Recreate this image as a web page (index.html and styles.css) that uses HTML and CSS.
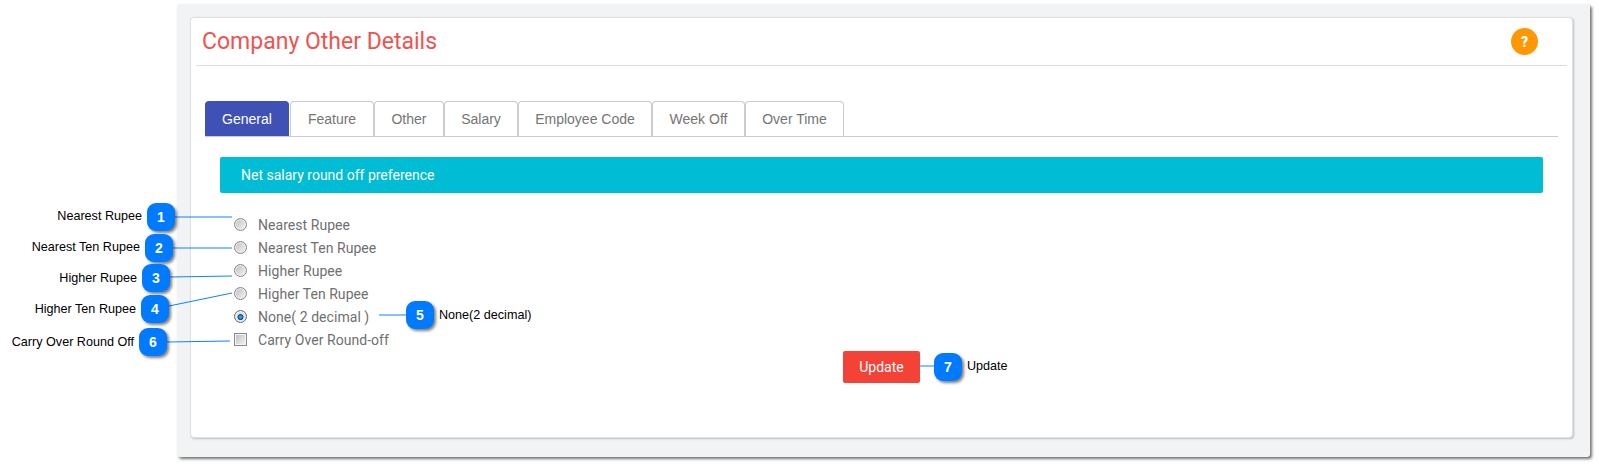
FILE: index.html
```html
<!DOCTYPE html>
<html lang="en">
<head>
<meta charset="utf-8">
<title>Company Other Details</title>
<link rel="stylesheet" href="styles.css">
</head>
<body>
<main class="shell">
  <section class="card">
    <header class="card-head">
      <h1 class="title">Company Other Details</h1>
      <span class="help">?</span>
    </header>
    <nav class="tabs">
      <a class="tab active">General</a>
      <a class="tab">Feature</a>
      <a class="tab">Other</a>
      <a class="tab">Salary</a>
      <a class="tab">Employee Code</a>
      <a class="tab">Week Off</a>
      <a class="tab">Over Time</a>
    </nav>
    <div class="banner">Net salary round off preference</div>
    <form class="options">
      <label class="option"><input type="radio" name="r"><span>Nearest Rupee</span></label>
      <label class="option"><input type="radio" name="r"><span>Nearest Ten Rupee</span></label>
      <label class="option"><input type="radio" name="r"><span>Higher Rupee</span></label>
      <label class="option"><input type="radio" name="r"><span>Higher Ten Rupee</span></label>
      <label class="option"><input type="radio" name="r" checked><span>None( 2 decimal )</span></label>
      <label class="option"><input type="checkbox"><span>Carry Over Round-off</span></label>
    </form>
    <div class="actions"><button class="update" type="button">Update</button></div>
  </section>
</main>

<svg class="leaders" width="1599" height="466" aria-hidden="true">
  <line x1="175" y1="217" x2="232" y2="217"/>
  <line x1="173" y1="248" x2="232" y2="248"/>
  <line x1="170" y1="277" x2="232" y2="276"/>
  <line x1="169" y1="306" x2="232" y2="293"/>
  <line x1="379" y1="315" x2="406" y2="315"/>
  <line x1="167" y1="342" x2="230" y2="341"/>
  <line x1="920" y1="366" x2="934" y2="366"/>
</svg>

<span class="note" style="right:1457px;top:209px">Nearest Rupee</span>
<span class="note" style="right:1459px;top:240px">Nearest Ten Rupee</span>
<span class="note" style="right:1462px;top:271px">Higher Rupee</span>
<span class="note" style="right:1463px;top:302px">Higher Ten Rupee</span>
<span class="note" style="right:1465px;top:335px">Carry Over Round Off</span>
<span class="note" style="left:439px;top:308px">None(2 decimal)</span>
<span class="note" style="left:967px;top:359px">Update</span>

<span class="badge" style="left:147px;top:203px">1</span>
<span class="badge" style="left:145px;top:234px">2</span>
<span class="badge" style="left:142px;top:264px">3</span>
<span class="badge" style="left:141px;top:295px">4</span>
<span class="badge" style="left:406px;top:301px">5</span>
<span class="badge" style="left:139px;top:328px">6</span>
<span class="badge" style="left:934px;top:353px">7</span>
</body>
</html>
```
FILE: styles.css
```css
* { box-sizing: border-box; }
html, body { margin: 0; padding: 0; background: #fff; }
body { position: relative; width: 1599px; height: 466px; overflow: hidden; font-family: "Liberation Sans", Arial, sans-serif; }

.shell {
  margin: 4px 0 0 177px;
  width: 1413px;
  height: 453px;
  padding: 13px 17px 19px 13px;
  background: #f2f3f5;
  border-radius: 3px;
  box-shadow: 2px 2px 3px rgba(0,0,0,.55);
}
.card {
  height: 421px;
  padding: 0 5px;
  background: #fff;
  border: 1px solid #e0e0e0;
  border-radius: 4px;
  box-shadow: 1px 1px 2px rgba(0,0,0,.22);
}
.card-head {
  display: flex;
  align-items: center;
  justify-content: space-between;
  height: 48px;
  padding: 0 29px 0 6px;
  border-bottom: 1px solid #ddd;
}
.title {
  margin: 0;
  font: 400 23px "Roboto", sans-serif;
  color: #ef5350;
}
.help {
  display: flex;
  align-items: center;
  justify-content: center;
  width: 27px;
  height: 27px;
  border-radius: 50%;
  background: #ff9800;
  color: #fff;
  font: 900 14px "Roboto", sans-serif;
}
.tabs {
  display: flex;
  margin: 35px 9px 0 9px;
  border-bottom: 1px solid #ccc;
  height: 36px;
}
.tab {
  display: block;
  height: 35px;
  text-align: center;
  line-height: 35px;
  font-size: 14px;
  color: #757575;
  border: 1px solid #ccc;
  border-bottom: 0;
  border-radius: 4px 4px 0 0;
}
.tab:nth-child(1) { width: 84px; margin-right: 1px; }
.tab:nth-child(2) { width: 84px; }
.tab:nth-child(3) { width: 70px; }
.tab:nth-child(4) { width: 74px; }
.tab:nth-child(5) { width: 134px; }
.tab:nth-child(6) { width: 93px; }
.tab:nth-child(7) { width: 99px; }
.tab.active { background: #3f51b5; border-color: #3f51b5; color: #fff; }
.banner {
  margin: 20px 24px 0 24px;
  height: 36px;
  padding-left: 21px;
  background: #00bcd4;
  border-radius: 2px;
  color: #fff;
  font: 400 14px/36px "Roboto", sans-serif;
}
.options {
  display: flex;
  flex-direction: column;
  margin: 20px 0 0 38px;
}
.option {
  display: flex;
  align-items: center;
  height: 23px;
  font: 400 14px "Roboto", sans-serif;
  letter-spacing: .05px;
  color: #707070;
}
.option input {
  appearance: none;
  margin: -1px 11px 0 0;
  width: 13px;
  height: 13px;
  flex: none;
  border: 1px solid #8a8a8a;
  background: linear-gradient(135deg, #bdbdbd, #f6f6f6);
}
.option input[type=radio] { border-radius: 50%; box-shadow: inset 0 0 0 1px #eee; }
.option input[type=radio]:checked {
  background: radial-gradient(circle at 50% 55%, #3a9ad9 0 1px, #0b4f86 2.6px, #dfe5ea 3.4px);
  border-color: #5f6b73;
}
.option input[type=checkbox] { box-shadow: inset 0 0 0 1px #f4f4f4; }
.actions {
  display: flex;
  justify-content: center;
}
.update {
  width: 77px;
  height: 32px;
  border: 0;
  border-radius: 2px;
  background: #f44336;
  color: #fff;
  font: 400 14px "Roboto", sans-serif;
}
.leaders { position: absolute; left: 0; top: 0; pointer-events: none; }
.leaders line { stroke: #0a84ff; stroke-width: 1; }
.note {
  position: absolute;
  font-size: 12.6px;
  line-height: 14px;
  color: #000;
  white-space: nowrap;
}
.badge {
  position: absolute;
  display: flex;
  align-items: center;
  justify-content: center;
  width: 28px;
  height: 28px;
  border-radius: 9px;
  background: #007bff;
  color: #fff;
  font: 700 14px "Liberation Sans", Arial, sans-serif;
  box-shadow: 2px 2px 3px rgba(0,0,0,.5);
}
```
